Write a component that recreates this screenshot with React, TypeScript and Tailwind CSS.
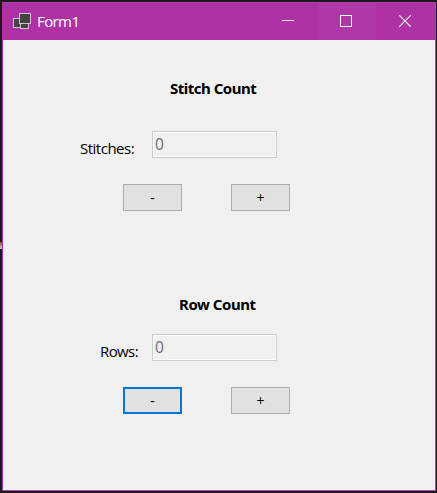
type CounterProps = {
  title: string;
  titleClass: string;
  label: string;
  labelClass: string;
  focused?: boolean;
};

function Counter({ title, titleClass, label, labelClass, focused }: CounterProps) {
  const button =
    "flex h-[27px] w-[59px] items-center justify-center bg-[#e1e1e1] text-[14px] leading-none text-black";
  return (
    <section className="flex flex-col">
      <h2 className={`whitespace-nowrap font-['Noto_Sans',sans-serif] font-bold leading-5 ${titleClass}`}>{title}</h2>
      <div className="flex h-[27px]">
        <label className={`shrink-0 whitespace-nowrap leading-5 ${labelClass}`}>{label}</label>
        <div className="h-[27px] w-[125px] border border-[#cccccc] bg-[#f0f0f0] shadow-[inset_0_0_0_1px_#fcfcfc]">
          <span className="block pl-[2px] pt-[2px] text-[15.5px] leading-5 text-[#6d6d6d]">0</span>
        </div>
      </div>
      <div className="mt-[26px] flex gap-[49px] pl-[120px]">
        <button className={`${button} ${focused ? "border-2 border-[#0078d7]" : "border border-[#adadad]"}`}>-</button>
        <button className={`${button} border border-[#adadad]`}>+</button>
      </div>
    </section>
  );
}

export default function App() {
  return (
    <div className="relative flex h-[493px] w-[437px] flex-col overflow-hidden bg-[#1a1a1a] pb-[2px] pl-[2px] pr-px pt-[2px] font-['Open_Sans','Noto_Sans',sans-serif]">
      <div className="absolute left-0 top-[242px] h-[7px] w-[2px] bg-linear-to-b from-[#8a4a20] to-[#a8d0f0]" />
      <div className="flex min-h-0 flex-1 flex-col border border-[#b63fae] border-l-[#b32cab] border-t-[#b53caf] bg-[#f0f0f0]">
        <header className="flex h-[37px] shrink-0 items-center bg-[#ae32a5]">
          <svg className="ml-[10px] shrink-0" width="18" height="17" viewBox="0 0 18 17" shapeRendering="crispEdges">
            <rect x="0.5" y="5.5" width="8" height="9" fill="#444" stroke="#d5c0d4" />
            <rect x="7.5" y="10.5" width="8" height="5" fill="#444" stroke="#d5c0d4" />
            <rect x="6.5" y="0.5" width="11" height="10" fill="#444" stroke="#d5c0d4" />
          </svg>
          <span className="-mt-[2px] ml-[6px] flex-1 text-[15px] leading-5 tracking-[-0.6px] text-white">Form1</span>
          <div className="flex h-full w-[58px] items-center justify-center">
            <svg className="-mt-[3px] mr-[2px]" width="12" height="12" viewBox="0 0 12 12" shapeRendering="crispEdges">
              <path d="M0 6.5h12" stroke="white" />
            </svg>
          </div>
          <div className="flex h-full w-[58px] items-center justify-center bg-[#b037a7]">
            <svg className="-mt-px mr-[2px]" width="12" height="12" viewBox="0 0 12 12" shapeRendering="crispEdges">
              <rect x=".5" y=".5" width="11" height="11" fill="none" stroke="white" />
            </svg>
          </div>
          <div className="flex h-full w-[59px] items-center justify-center">
            <svg className="-mt-px mr-px" width="12" height="12" viewBox="0 0 12 12">
              <path d="M.3 .3 11.7 11.7M11.7 .3 .3 11.7" stroke="white" strokeWidth="1.1" />
            </svg>
          </div>
        </header>
        <main className="flex flex-col pt-[38px]">
          <Counter
            title="Stitch Count"
            titleClass="mb-[33px] pl-[167px] text-[15px] tracking-[-0.5px]"
            label="Stitches:"
            labelClass="w-[149px] pl-[77px] pt-[7px] text-[15px] tracking-[-0.5px]"
          />
          <div className="mt-[83px]">
            <Counter
              title="Row Count"
              titleClass="mb-5 pl-[176px] text-[15px] tracking-[-0.45px]"
              label="Rows:"
              labelClass="w-[149px] pl-[97px] pt-[7px] text-[15px] tracking-[-0.6px]"
              focused
            />
          </div>
        </main>
      </div>
    </div>
  );
}
